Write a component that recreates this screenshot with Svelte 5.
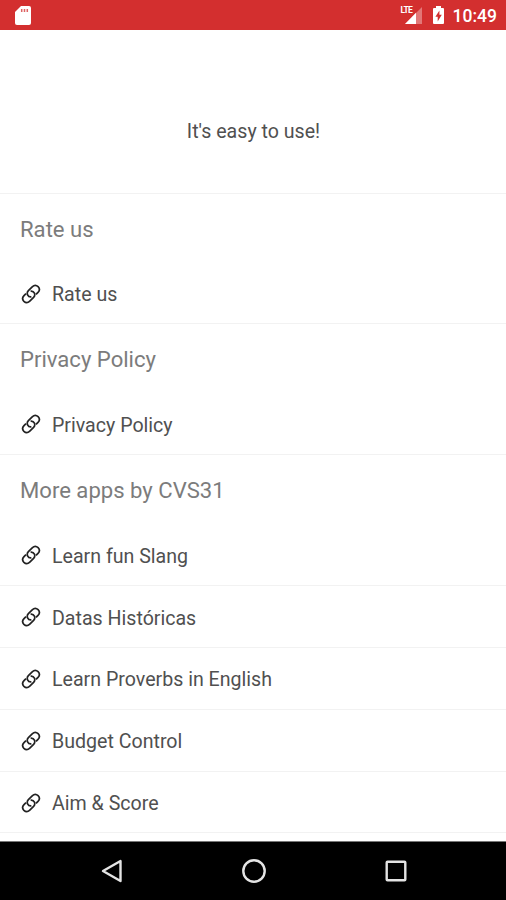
<script>
  const sections = [
    { title: 'Rate us', links: ['Rate us'] },
    { title: 'Privacy Policy', links: ['Privacy Policy'] },
    {
      title: 'More apps by CVS31',
      links: [
        'Learn fun Slang',
        'Datas Históricas',
        'Learn Proverbs in English',
        'Budget Control',
        'Aim & Score'
      ]
    }
  ];
</script>

<div class="screen">
  <header class="status-bar">
    <svg class="sd-card" width="16" height="19" viewBox="0 0 16 19">
      <path fill="#fff" d="M6 0h8q2 0 2 2v15q0 2-2 2H2q-2 0-2-2V6z" />
      <path stroke="#d32f2f" stroke-opacity=".75" stroke-width="1.5" d="M6.7 3v3M9.5 3v3M12.3 3v3" />
    </svg>
    <div class="status-icons">
      <div class="signal">
        <svg width="18" height="17" viewBox="0 0 18 17">
          <path fill="#fff" fill-opacity=".35" d="M18 0v17H1z" />
          <path fill="#fff" d="M12 5.7v11.3H1z" />
        </svg>
        <span>LTE</span>
      </div>
      <svg class="battery" width="11" height="18" viewBox="0 0 11 18">
        <path fill="#fff" d="M3 0h5v2h2q1 0 1 1v14q0 1-1 1H1q-1 0-1-1V3q0-1 1-1h2z" />
        <path fill="#d32f2f" d="M6.4 4.5v4.2h2.4L4.7 15.5v-4.8H2.4z" />
      </svg>
      <span class="time">10:49</span>
    </div>
  </header>

  <main>
    <p class="intro">It's easy to use!</p>
    {#each sections as section}
      <section>
        <h2>{section.title}</h2>
        {#each section.links as link}
          <div class="row">
            <svg class="link-icon" width="20" height="20" viewBox="0 0 20 20">
              <g fill="none" stroke="#222" stroke-width="1.7">
                <path d="M10.4 12.8C6.6 13.2 5 9.2 7.4 6.6L11.2 2.9C13 1.2 15.5 1.2 17.1 2.7C18.7 4.3 18.6 6.7 17 8.4L15 10.4" />
                <path d="M9.6 7.2C13.4 6.8 15 10.8 12.6 13.4L8.8 17.1C7 18.8 4.5 18.800 2.9 17.3C1.3 15.700 1.4 13.300 3 11.600L5 9.6" />
              </g>
            </svg>
            <span>{link}</span>
          </div>
        {/each}
      </section>
    {/each}
  </main>

  <nav>
    <svg width="22" height="24" viewBox="0 0 22 24">
      <path d="M19.5 2v20L2 12z" />
    </svg>
    <svg width="24" height="24" viewBox="0 0 24 24">
      <circle cx="12" cy="12" r="10.7" />
    </svg>
    <svg width="22" height="22" viewBox="0 0 22 22">
      <rect x="1.7" y="1.7" width="18.6" height="18.6" rx=".8" />
    </svg>
  </nav>
</div>

<style>
  :global(body) {
    margin: 0;
  }

  .screen {
    display: flex;
    flex-direction: column;
    width: 506px;
    height: 900px;
    overflow: hidden;
    background: #fff;
    color: #505050;
    font-family: Roboto, sans-serif;
  }

  .status-bar {
    display: flex;
    flex: none;
    align-items: center;
    justify-content: space-between;
    box-sizing: border-box;
    height: 30px;
    padding: 0 9px 0 15px;
    background: #d32f2f;
  }

  .status-icons {
    display: flex;
    align-items: center;
  }

  .signal {
    position: relative;
    height: 17px;
    margin-right: 11px;
  }

  .signal svg {
    display: block;
  }

  .signal span {
    position: absolute;
    top: -1px;
    left: -3px;
    color: #fff;
    font-size: 8.5px;
    font-weight: 700;
    line-height: 8px;
    letter-spacing: -0.8px;
  }

  .battery {
    margin-right: 9px;
  }

  .time {
    padding-top: 2px;
    color: #fff;
    font-size: 17.5px;
    font-weight: 500;
    line-height: 28px;
  }

  main {
    flex: 1;
    min-height: 0;
    overflow: hidden;
  }

  .intro {
    box-sizing: border-box;
    height: 163.6px;
    margin: 0;
    padding: 90px 0 0 1px;
    border-bottom: 1px solid #f2f2f2;
    font-size: 19.6px;
    line-height: 24px;
    text-align: center;
  }

  h2 {
    box-sizing: border-box;
    height: 69.1px;
    margin: 0;
    padding: 21px 20px 0;
    color: #7c7c7c;
    font-size: 22.1px;
    font-weight: 400;
    line-height: 28px;
  }

  .row {
    display: flex;
    align-items: center;
    box-sizing: border-box;
    height: 61.8px;
    padding: 1px 0 0 21px;
    border-bottom: 1px solid #f2f2f2;
    font-size: 19.6px;
  }

  .row span {
    padding-top: 2px;
  }

  .link-icon {
    margin-right: 11px;
  }

  nav {
    display: flex;
    flex: none;
    align-items: center;
    justify-content: space-between;
    box-sizing: border-box;
    height: 59px;
    padding: 0 99px 0 101px;
    border-top: 1px solid #777;
    background: #000;
  }

  nav svg {
    fill: none;
    stroke: #e4e4e4;
    stroke-width: 2.4;
    stroke-linejoin: round;
  }
</style>
